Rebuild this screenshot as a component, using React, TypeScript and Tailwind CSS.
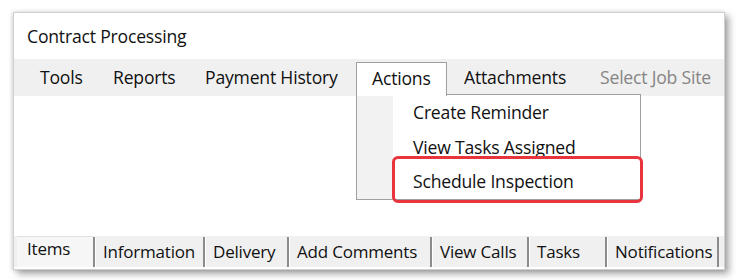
const menu = [
  { label: "Tools", w: "w-[73px]" },
  { label: "Reports", w: "w-[92px]" },
  { label: "Payment History", w: "w-[166px]" },
];

const tabs = [
  { label: "Information", w: "w-[110px]" },
  { label: "Delivery", w: "w-[84px]" },
  { label: "Add Comments", w: "w-[143px]" },
  { label: "View Calls", w: "w-[97px]" },
  { label: "Tasks", w: "w-[78px]" },
  { label: "Notifications", w: "w-[112px]" },
];

export default function App() {
  return (
    <div className="w-[739px] h-[280px] bg-white pt-[12px] pl-[13px] font-['Open_Sans','Noto_Sans',sans-serif] text-[#111111] text-[17.6px] tracking-[-0.2px]">
      <div className="relative flex flex-col w-[712px] h-[258px] bg-white border border-[#d0d0d0] shadow-[4px_4px_7px_rgba(0,0,0,0.35),-1px_0_4px_rgba(0,0,0,0.15)]">
        {/* title */}
        <div className="h-[46px] pl-[13px] flex items-center">Contract Processing</div>

        {/* menu bar */}
        <div className="h-[37px] bg-[#f0f0f0] flex items-stretch pl-[11px]">
          {menu.map((m) => (
            <div key={m.label} className={`${m.w} pl-[15px] flex items-center`}>
              {m.label}
            </div>
          ))}
          <div className="relative w-[91px] mt-[3px] pl-[15px] pb-[2px] flex items-center bg-white border border-b-0 border-[#a0a0a0] z-10">
            Actions
          </div>
          <div className="w-[139px] pl-[17px] flex items-center">Attachments</div>
          <div className="flex-1 pl-[14px] flex items-center text-[#858585]">Select Job Site</div>
        </div>

        {/* content */}
        <div className="flex-1" />

        {/* tab strip */}
        <div className="h-[31px] bg-[#f0f0f0] flex items-stretch pl-[3px] mb-[2px] text-[17px]">
          <div className="w-[76px] pl-[10px] flex items-start bg-[#f6f6f6] border-t border-[#e0e0e0]">
            <span className="leading-[24px]">Items</span>
          </div>
          {tabs.map((t) => (
            <div
              key={t.label}
              className={`${t.w} pl-[8px] mt-[1px] flex items-center border-l-2 border-l-[#8c8c8c] shadow-[inset_1px_0_0_#ffffff]`}
            >
              {t.label}
            </div>
          ))}
          <div className="border-l-2 border-l-[#8c8c8c] mt-[1px]" />
        </div>

        {/* dropdown */}
        <div className="absolute left-[342px] top-[81px] w-[285px] h-[106px] bg-white border border-[#a0a0a0] flex z-0">
          <div className="w-[36px] bg-[#f2f2f2]" />
          <div className="flex flex-col pl-[20px]">
            <div className="h-[35px] flex items-center">Create Reminder</div>
            <div className="h-[35px] flex items-center">View Tasks Assigned</div>
            <div className="h-[35px] flex items-center">Schedule Inspection</div>
          </div>
        </div>

        {/* highlight */}
        <div className="absolute left-[378px] top-[143px] w-[251px] h-[47px] border-[3px] border-[#e8343c] rounded-[6px] z-20" />
      </div>
    </div>
  );
}
